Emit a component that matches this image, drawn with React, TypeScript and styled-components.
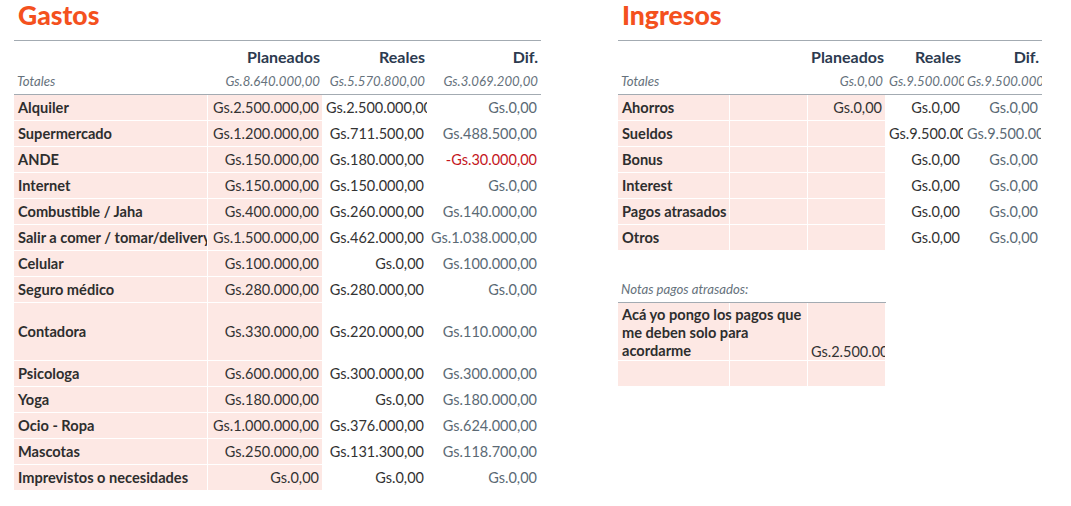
import React from "react";
import styled, { createGlobalStyle } from "styled-components";

const GlobalStyle = createGlobalStyle`
  body {
    margin: 0;
    background: #ffffff;
    font-family: Lato, "Open Sans", sans-serif;
  }
`;

type Tone = "label" | "value" | "diff" | "neg";

const gastos: [string, string, string, string, number?][] = [
  ["Alquiler", "Gs.2.500.000,00", "Gs.2.500.000,00", "Gs.0,00"],
  ["Supermercado", "Gs.1.200.000,00", "Gs.711.500,00", "Gs.488.500,00"],
  ["ANDE", "Gs.150.000,00", "Gs.180.000,00", "-Gs.30.000,00"],
  ["Internet", "Gs.150.000,00", "Gs.150.000,00", "Gs.0,00"],
  ["Combustible / Jaha", "Gs.400.000,00", "Gs.260.000,00", "Gs.140.000,00"],
  ["Salir a comer / tomar/delivery", "Gs.1.500.000,00", "Gs.462.000,00", "Gs.1.038.000,00"],
  ["Celular", "Gs.100.000,00", "Gs.0,00", "Gs.100.000,00"],
  ["Seguro médico", "Gs.280.000,00", "Gs.280.000,00", "Gs.0,00"],
  ["Contadora", "Gs.330.000,00", "Gs.220.000,00", "Gs.110.000,00", 58],
  ["Psicologa", "Gs.600.000,00", "Gs.300.000,00", "Gs.300.000,00"],
  ["Yoga", "Gs.180.000,00", "Gs.0,00", "Gs.180.000,00"],
  ["Ocio - Ropa", "Gs.1.000.000,00", "Gs.376.000,00", "Gs.624.000,00"],
  ["Mascotas", "Gs.250.000,00", "Gs.131.300,00", "Gs.118.700,00"],
  ["Imprevistos o necesidades", "Gs.0,00", "Gs.0,00", "Gs.0,00"],
];

const ingresos: [string, string, string, string][] = [
  ["Ahorros", "Gs.0,00", "Gs.0,00", "Gs.0,00"],
  ["Sueldos", "", "Gs.9.500.000,00", "Gs.9.500.000,00"],
  ["Bonus", "", "Gs.0,00", "Gs.0,00"],
  ["Interest", "", "Gs.0,00", "Gs.0,00"],
  ["Pagos atrasados", "", "Gs.0,00", "Gs.0,00"],
  ["Otros", "", "Gs.0,00", "Gs.0,00"],
];

const Page = styled.div`
  display: flex;
  gap: 77px;
  padding-left: 14px;
`;

const Section = styled.section<{ $w: number }>`
  width: ${(p) => p.$w}px;
  display: flex;
  flex-direction: column;
`;

const Title = styled.h1`
  margin: 0;
  height: 40px;
  padding-left: 4px;
  font-family: Lato, sans-serif;
  font-weight: 900;
  font-size: 26.5px;
  line-height: 31px;
  color: #f4511e;
`;

const Sheet = styled.table<{ $mt?: number }>`
  table-layout: fixed;
  border-collapse: separate;
  border-spacing: 0;
  border-top: 1px solid #a3abb2;
  margin-top: ${(p) => p.$mt ?? 0}px;
`;

const HeadCell = styled.th`
  box-sizing: border-box;
  height: 27px;
  padding: 3px 3px 0;
  text-align: right;
  font-size: 16px;
  font-weight: 700;
  color: #2c3a4f;
  white-space: nowrap;
  overflow: hidden;
  vertical-align: middle;
`;

const TotalCell = styled.td<{ $left?: boolean }>`
  box-sizing: border-box;
  height: 27px;
  padding: 0 3px;
  text-align: ${(p) => (p.$left ? "left" : "right")};
  font-size: 13.2px;
  font-style: italic;
  color: #66727c;
  white-space: nowrap;
  overflow: hidden;
  border-bottom: 1px solid #a3abb2;
  vertical-align: middle;
`;

const toneColor: Record<Tone, string> = {
  label: "#2e2e2e",
  value: "#333333",
  diff: "#5b6a75",
  neg: "#c4161c",
};

const Cell = styled.td<{ $pink?: boolean; $tone: Tone; $h?: number }>`
  box-sizing: border-box;
  height: ${(p) => p.$h ?? 26}px;
  padding: 0 3px 0 ${(p) => (p.$tone === "label" ? 4 : 3)}px;
  background: ${(p) => (p.$pink ? "#fde8e4" : "#ffffff")};
  border-right: 1px solid #ffffff;
  border-bottom: 1px solid #ffffff;
  text-align: ${(p) => (p.$tone === "label" ? "left" : "right")};
  font-size: ${(p) => (p.$tone === "label" ? "14.6px" : "14.5px")};
  font-weight: ${(p) => (p.$tone === "label" ? 700 : 400)};
  color: ${(p) => toneColor[p.$tone]};
  white-space: nowrap;
  overflow: hidden;
  vertical-align: middle;
`;

const NoteCell = styled(Cell)`
  overflow: visible;
  vertical-align: bottom;
  padding-bottom: 0;
`;

const NoteText = styled.div`
  width: 185px;
  white-space: normal;
  line-height: 18px;
  position: relative;
`;

const Cols: React.FC<{ widths: number[] }> = ({ widths }) => (
  <colgroup>
    {widths.map((w, i) => (
      <col key={i} style={{ width: w }} />
    ))}
  </colgroup>
);

export default function App() {
  return (
    <>
      <GlobalStyle />
      <Page>
        <Section $w={527}>
          <Title>Gastos</Title>
          <Sheet style={{ width: 527 }}>
            <Cols widths={[194, 115, 105, 113]} />
            <thead>
              <tr>
                <HeadCell />
                <HeadCell>Planeados</HeadCell>
                <HeadCell>Reales</HeadCell>
                <HeadCell>Dif.</HeadCell>
              </tr>
              <tr>
                <TotalCell $left>Totales</TotalCell>
                <TotalCell>Gs.8.640.000,00</TotalCell>
                <TotalCell>Gs.5.570.800,00</TotalCell>
                <TotalCell>Gs.3.069.200,00</TotalCell>
              </tr>
            </thead>
            <tbody>
              {gastos.map(([label, plan, real, dif, h]) => (
                <tr key={label}>
                  <Cell $pink $tone="label" $h={h}>{label}</Cell>
                  <Cell $pink $tone="value" $h={h}>{plan}</Cell>
                  <Cell $tone="value" $h={h}>{real}</Cell>
                  <Cell $tone={dif.startsWith("-") ? "neg" : "diff"} $h={h}>{dif}</Cell>
                </tr>
              ))}
            </tbody>
          </Sheet>
        </Section>

        <Section $w={424}>
          <Title>Ingresos</Title>
          <Sheet style={{ width: 424 }}>
            <Cols widths={[112, 78, 78, 78, 78]} />
            <thead>
              <tr>
                <HeadCell />
                <HeadCell />
                <HeadCell>Planeados</HeadCell>
                <HeadCell>Reales</HeadCell>
                <HeadCell>Dif.</HeadCell>
              </tr>
              <tr>
                <TotalCell $left>Totales</TotalCell>
                <TotalCell />
                <TotalCell>Gs.0,00</TotalCell>
                <TotalCell>Gs.9.500.000,00</TotalCell>
                <TotalCell>Gs.9.500.000,00</TotalCell>
              </tr>
            </thead>
            <tbody>
              {ingresos.map(([label, plan, real, dif]) => (
                <tr key={label}>
                  <Cell $pink $tone="label">{label}</Cell>
                  <Cell $pink $tone="value" />
                  <Cell $pink $tone="value">{plan}</Cell>
                  <Cell $tone="value">{real}</Cell>
                  <Cell $tone="diff">{dif}</Cell>
                </tr>
              ))}
            </tbody>
          </Sheet>

          <Sheet style={{ width: 268, borderTop: "none" }} $mt={25}>
            <Cols widths={[112, 78, 78]} />
            <thead>
              <tr>
                <TotalCell $left colSpan={3}>Notas pagos atrasados:</TotalCell>
              </tr>
            </thead>
            <tbody>
              <tr>
                <NoteCell $pink $tone="label" $h={58}>
                  <NoteText>Acá yo pongo los pagos que me deben solo para acordarme</NoteText>
                </NoteCell>
                <Cell $pink $tone="value" $h={58} />
                <NoteCell $pink $tone="value" $h={58} style={{ overflow: "hidden" }}>
                  Gs.2.500.000,00
                </NoteCell>
              </tr>
              <tr>
                <Cell $pink $tone="value" />
                <Cell $pink $tone="value" />
                <Cell $pink $tone="value" />
              </tr>
            </tbody>
          </Sheet>
        </Section>
      </Page>
    </>
  );
}
